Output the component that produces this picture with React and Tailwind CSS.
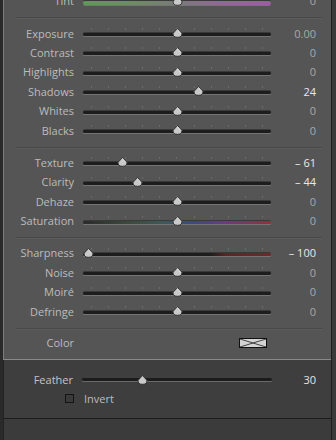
import React from 'react';

const FONT = {fontFamily: '"Open Sans", "Noto Sans", sans-serif'};

function Thumb({pos}) {
  // pos is 0..1 along the usable range of the track
  return (
    <svg
      width="11"
      height="10"
      viewBox="0 0 11 10"
      className="absolute top-[1px]"
      style={{left: `${5 + pos * 178 - 5.5}px`}}
    >
      <path
        d="M5.5 0.5 L9.8 5.2 Q10.5 9.3 5.5 9.3 Q0.5 9.3 1.2 5.2 Z"
        fill="#c9c9c9"
        stroke="#2e2e2e"
        strokeWidth="0.9"
      />
      <path d="M5.5 1.8 L8.6 5.4" stroke="#e6e6e6" strokeWidth="0.8" />
    </svg>
  );
}

function Track({value, min = -100, max = 100, kind}) {
  const pos = (value - min) / (max - min);
  let bar = 'bg-[#1d1d1d]';
  if (kind === 'tint')
    bar =
      'bg-[linear-gradient(to_right,#5e9a56,#6f8a66_30%,#7a7a7a_50%,#8f6a92_70%,#a05aa8)] h-[4px]';
  if (kind === 'sat')
    bar =
      'bg-[linear-gradient(to_right,#2a2a2a,#3d4a3e_25%,#3c5a56_42%,#3a4a80_58%,#6a3c7a_76%,#9a2c3a)]';
  if (kind === 'sharp')
    bar = 'bg-[linear-gradient(to_right,#1d1d1d_0%,#1d1d1d_68%,#5a2626_76%,#6e2a2a)]';
  return (
    <div className="relative w-[188px] h-[12px] flex flex-col">
      <div className="flex justify-between px-[8px] h-[4px] mt-[1px]">
        {Array.from({length: 11}).map((_, i) => (
          <div key={i} className="w-[1px] h-[2px] bg-[#6b6b6b]" />
        ))}
      </div>
      <div
        className={`mt-[1px] h-[3px] rounded-full ${bar} shadow-[0_1px_0_#747474,0_-1px_0_#3a3a3a]`}
      />
      <Thumb pos={pos} />
    </div>
  );
}

function Row({label, value, num, kind, bright}) {
  return (
    <div className="flex items-center h-[19.4px]">
      <div className="w-[70px] text-right text-[11px] text-[#bcbcbc] leading-none">
        {label}
      </div>
      <div className="ml-[9px]">
        <Track value={num} kind={kind} />
      </div>
      <div
        className={`flex-1 text-right pr-[15px] text-[11px] leading-none ${
          bright ? 'text-[#e8e8e8]' : 'text-[#a9a9a9]'
        }`}
      >
        {value}
      </div>
    </div>
  );
}

function Separator() {
  return (
    <div className="ml-[12px] mr-[9px] h-[2px] border-t border-[#484848] border-b border-b-[#5c5c5c]" />
  );
}

function Group({rows}) {
  return (
    <div className="pt-[4px] pb-[7px]">
      {rows.map((r) => (
        <Row key={r.label} {...r} />
      ))}
    </div>
  );
}

export default function App() {
  return (
    <div
      className="w-[336px] h-[440px] overflow-hidden bg-[#3b3b3b] flex"
      style={FONT}
    >
      <div className="w-[3px] bg-[#2a2a2a]" />
      <div className="w-[328px] flex flex-col">
        <div className="bg-[#555555] border-l border-[#7c7c7c] border-b border-b-[#8a8a8a]">
          <div className="-mt-[9px] pb-[7px]">
            <Row label="Tint" value="0" num={0} kind="tint" />
          </div>
          <Separator />
          <Group
            rows={[
              {label: 'Exposure', value: '0.00', num: 0},
              {label: 'Contrast', value: '0', num: 0},
              {label: 'Highlights', value: '0', num: 0},
              {label: 'Shadows', value: '24', num: 24, bright: true},
              {label: 'Whites', value: '0', num: 0},
              {label: 'Blacks', value: '0', num: 0},
            ]}
          />
          <Separator />
          <Group
            rows={[
              {label: 'Texture', value: '– 61', num: -61, bright: true},
              {label: 'Clarity', value: '– 44', num: -44, bright: true},
              {label: 'Dehaze', value: '0', num: 0},
              {label: 'Saturation', value: '0', num: 0, kind: 'sat'},
            ]}
          />
          <Separator />
          <Group
            rows={[
              {label: 'Sharpness', value: '– 100', num: -100, bright: true, kind: 'sharp'},
              {label: 'Noise', value: '0', num: 0},
              {label: 'Moiré', value: '0', num: 0},
              {label: 'Defringe', value: '0', num: 0},
            ]}
          />
          <Separator />
          <div className="flex items-center h-[29px] pb-[3px]">
            <div className="w-[70px] text-right text-[11px] text-[#bcbcbc] leading-none">
              Color
            </div>
            <div className="ml-[165px] w-[28px] h-[10px] border border-[#111] bg-[#d4d4d4]">
              <svg width="26" height="8" viewBox="0 0 26 8" className="block">
                <path d="M0 0 L26 8 M0 8 L26 0" stroke="#333" strokeWidth="0.9" />
              </svg>
            </div>
          </div>
        </div>
        <div className="bg-[#3e3e3e] border-l border-[#242424] pt-[10px] h-[59px] border-b border-b-[#1c1c1c]">
          <div className="flex items-center h-[20px]">
            <div className="w-[69px] text-right text-[11px] text-[#c4c4c4] leading-none">
              Feather
            </div>
            <div className="ml-[9px] relative w-[190px] h-[12px] flex flex-col justify-center">
              <div className="h-[3px] rounded-full bg-[#1c1c1c] shadow-[0_1px_0_#6a6a6a]" />
              <svg
                width="11"
                height="10"
                viewBox="0 0 11 10"
                className="absolute top-[1px] left-[55px]"
              >
                <path
                  d="M5.5 0.5 L9.8 5.2 Q10.5 9.3 5.5 9.3 Q0.5 9.3 1.2 5.2 Z"
                  fill="#c9c9c9"
                  stroke="#2e2e2e"
                  strokeWidth="0.9"
                />
              </svg>
            </div>
            <div className="flex-1 text-right pr-[15px] text-[11px] text-[#e4e4e4] leading-none">
              30
            </div>
          </div>
          <div className="flex items-center h-[18px] pl-[61px]">
            <div className="w-[9px] h-[9px] border border-[#141414] bg-[#3a3a3a]" />
            <div className="ml-[10px] text-[11px] text-[#bcbcbc] leading-none">Invert</div>
          </div>
        </div>
        <div className="flex-1 bg-[#3b3b3b] border-l border-[#242424]" />
      </div>
      <div className="w-[5px] border-l border-[#1e1e1e] bg-[#3a3a3a]" />
    </div>
  );
}
